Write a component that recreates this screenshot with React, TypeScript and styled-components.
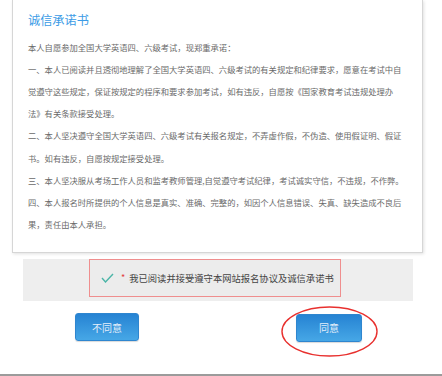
import React from "react";
import styled, { createGlobalStyle } from "styled-components";

const GlobalStyle = createGlobalStyle`
  html, body { margin: 0; padding: 0; background: #ffffff; }
  body { font-family: "Noto Sans CJK SC", "Noto Sans", sans-serif; }
`;

const Page = styled.div`
  width: 442px;
  height: 376px;
  display: flex;
  flex-direction: column;
  overflow: hidden;
  background: #fff;
`;

const Card = styled.div`
  box-sizing: border-box;
  margin-left: 12px;
  width: 411px;
  height: 253px;
  padding: 10px 0 0 15px;
  background: #fff;
  border: 1px solid #d6d6d6;
  border-top: none;
  box-shadow: 1px 1px 3px rgba(0, 0, 0, 0.12);
`;

const Title = styled.h1`
  margin: 0;
  font-size: 12.2px;
  line-height: 20px;
  font-weight: 400;
  color: #3b9be6;
`;

const Body = styled.div`
  margin-top: 5.6px;
  font-size: 8.3px;
  line-height: 22.2px;
  color: #6a6a6a;
  white-space: nowrap;
`;

const Para = styled.p`
  margin: 0;
`;

const Band = styled.div`
  margin: 6px 0 0 23px;
  width: 390px;
  height: 42px;
  background: #eeeeee;
  display: flex;
  align-items: flex-start;
`;

const AgreeBox = styled.label`
  box-sizing: border-box;
  margin-left: 66px;
  width: 252px;
  height: 38px;
  border: 1px solid #ef8e8e;
  background: #ececec;
  display: flex;
  align-items: center;
  padding-left: 11px;
`;

const Star = styled.span`
  color: #e23b3b;
  font-size: 9px;
  margin: 0 4px 0 7px;
  position: relative;
  top: -1px;
`;

const AgreeText = styled.span`
  font-size: 9.3px;
  color: #444;
  white-space: nowrap;
`;

const Actions = styled.div`
  margin-top: 12px;
  padding-left: 75px;
  display: flex;
  gap: 157px;
`;

const Btn = styled.button<{ $w: number }>`
  box-sizing: border-box;
  width: ${(p) => p.$w}px;
  height: 28px;
  border: 1px solid #2f86cf;
  border-radius: 3px;
  background: linear-gradient(#2683d3, #46a7e6);
  box-shadow: 0 1px 1px rgba(0, 0, 0, 0.15);
  color: #e4eefa;
  font-family: "Noto Sans CJK SC", sans-serif;
  font-size: 10px;
  padding: 0;
  cursor: pointer;
`;

const Marked = styled.div`
  position: relative;
`;

const Ring = styled.svg`
  position: absolute;
  left: -15px;
  top: -7px;
  width: 97px;
  height: 51px;
  pointer-events: none;
`;

const Spacer = styled.div`
  flex: 1;
`;

const BottomBar = styled.div`
  height: 2px;
  background: #9b9b9b;
`;

export default function App() {
  return (
    <>
      <GlobalStyle />
      <Page>
        <Card>
          <Title>诚信承诺书</Title>
          <Body>
            <Para>本人自愿参加全国大学英语四、六级考试，现郑重承诺：</Para>
            <Para>
              一、本人已阅读并且透彻地理解了全国大学英语四、六级考试的有关规定和纪律要求，愿意在考试中自
              <br />
              觉遵守这些规定，保证按规定的程序和要求参加考试，如有违反，自愿按《国家教育考试违规处理办
              <br />
              法》有关条款接受处理。
            </Para>
            <Para>
              二、本人坚决遵守全国大学英语四、六级考试有关报名规定，不弄虚作假，不伪造、使用假证明、假证
              <br />
              书。如有违反，自愿按规定接受处理。
            </Para>
            <Para>三、本人坚决服从考场工作人员和监考教师管理,自觉遵守考试纪律，考试诚实守信，不违规，不作弊。</Para>
            <Para>
              四、本人报名时所提供的个人信息是真实、准确、完整的，如因个人信息错误、失真、缺失造成不良后
              <br />
              果，责任由本人承担。
            </Para>
          </Body>
        </Card>
        <Band>
          <AgreeBox>
            <svg width="13" height="10" viewBox="0 0 13 10">
              <polyline points="1,5 4.5,9 12,1" fill="none" stroke="#4bb5a7" strokeWidth="1.4" />
            </svg>
            <Star>*</Star>
            <AgreeText>我已阅读并接受遵守本网站报名协议及诚信承诺书</AgreeText>
          </AgreeBox>
        </Band>
        <Actions>
          <Btn $w={64}>不同意</Btn>
          <Marked>
            <Btn $w={66}>同意</Btn>
            <Ring viewBox="0 0 97 51">
              <ellipse cx="48.5" cy="25.5" rx="47.5" ry="24.5" fill="none" stroke="#e8302e" strokeWidth="1.4" />
            </Ring>
          </Marked>
        </Actions>
        <Spacer />
        <BottomBar />
      </Page>
    </>
  );
}
